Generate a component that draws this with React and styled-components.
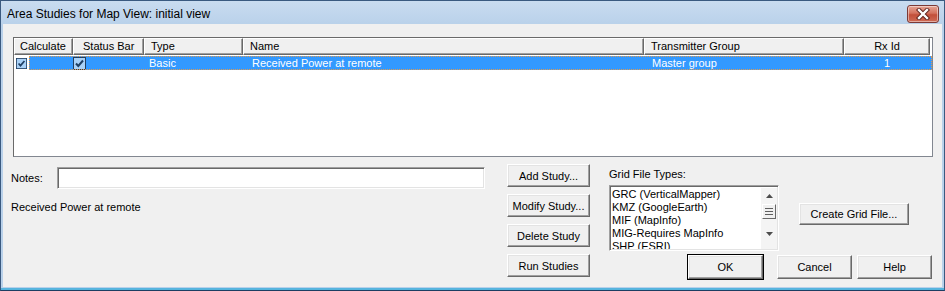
import React from 'react';
import styled, { createGlobalStyle } from 'styled-components';

const GlobalStyle = createGlobalStyle`
  html, body {
    margin: 0;
    padding: 0;
    background: #ffffff;
  }
  body {
    width: 945px;
    height: 291px;
    overflow: hidden;
    font-family: "Liberation Sans", Arial, sans-serif;
    font-size: 11px;
    color: #000;
  }
`;

const Window = styled.div`
  box-sizing: border-box;
  width: 945px;
  height: 291px;
  display: flex;
  flex-direction: column;
  border: 1px solid #3a5a80;
  border-bottom-color: #1d3e62;
  background: linear-gradient(#c9dcf0, #b9d1ea 24px);
  box-shadow: inset 0 -2px 0 #56b4de;
`;

const TitleBar = styled.div`
  height: 23px;
  display: flex;
  align-items: center;
  padding: 0 5px 0 6px;
`;

const Title = styled.div`
  flex: 1;
  font-size: 12px;
  padding-top: 3px;
  color: #000;
`;

const CloseButton = styled.div`
  width: 30px;
  height: 16px;
  margin-top: 3px;
  display: flex;
  align-items: center;
  justify-content: center;
  border: 1px solid #7c3a36;
  border-radius: 3px;
  background: linear-gradient(#e6a595, #d4725e 45%, #c24f3a 55%, #cf6b55);
  box-shadow: inset 0 0 0 1px rgba(255, 255, 255, 0.45);
`;

const Client = styled.div`
  flex: 1;
  margin: 0 2px 3px 2px;
  background: #f0f0f0;
  padding: 13px 8px 0 8px;
  display: flex;
  flex-direction: column;
`;

const ListView = styled.div`
  box-sizing: border-box;
  width: 920px;
  height: 120px;
  margin-left: 2px;
  background: #fff;
  border: 1px solid #828790;
  border-top-color: #6a6a6a;
  border-left-color: #6a6a6a;
`;

const HeaderRow = styled.div`
  display: flex;
  height: 17px;
`;

const HeaderCell = styled.div`
  box-sizing: border-box;
  width: ${({ w }) => w}px;
  padding: 0 ${({ pad }) => pad || 6}px;
  line-height: 15px;
  text-align: ${({ align }) => align || 'left'};
  background: #f0f0f0;
  border: 1px solid;
  border-color: #fff #696969 #696969 #fff;
  box-shadow: inset -1px -1px 0 #a0a0a0;
  white-space: nowrap;
`;

const Row = styled.div`
  display: flex;
  height: 14px;
  margin-top: 1px;
`;

const Cell = styled.div`
  box-sizing: border-box;
  width: ${({ w }) => w}px;
  padding: 0 ${({ pad }) => pad || 0}px;
  height: 14px;
  line-height: 14px;
  display: flex;
  align-items: center;
  justify-content: ${({ align }) => (align === 'center' ? 'center' : 'flex-start')};
  color: #fff;
  white-space: nowrap;
`;

const Highlight = styled.div`
  flex: 1;
  display: flex;
  background: #3399ff;
  outline: 1px dotted #e09a50;
  outline-offset: -1px;
`;

const Bottom = styled.div`
  display: flex;
  align-items: flex-start;
  margin-top: 7px;
`;

const NotesPanel = styled.div`
  width: 474px;
  padding-top: 3px;
`;

const NotesRow = styled.div`
  display: flex;
  align-items: center;
`;

const Label = styled.div`
  width: ${({ w }) => (w ? `${w}px` : 'auto')};
  line-height: 13px;
  white-space: nowrap;
`;

const TextInput = styled.div`
  box-sizing: border-box;
  width: 428px;
  height: 22px;
  background: #fff;
  border: 1px solid;
  border-color: #a0a0a0 #fff #fff #a0a0a0;
  box-shadow: inset 1px 1px 0 #696969, inset -1px -1px 0 #e3e3e3;
`;

const Summary = styled.div`
  margin-top: 12px;
  line-height: 13px;
`;

const ButtonColumn = styled.div`
  display: flex;
  flex-direction: column;
  gap: 7px;
  margin-left: 22px;
`;

const Button = styled.div`
  box-sizing: border-box;
  width: ${({ w }) => w || 83}px;
  height: ${({ h }) => h || 23}px;
  margin-right: ${({ mr }) => mr || 0}px;
  display: flex;
  align-items: center;
  justify-content: center;
  background: #f0f0f0;
  border: 1px solid;
  border-color: #fff #696969 #696969 #fff;
  box-shadow: inset -1px -1px 0 #a0a0a0, inset 1px 1px 0 #e3e3e3;
  outline: ${({ primary }) => (primary ? '1px solid #000' : 'none')};
  white-space: nowrap;
`;

const GridPanel = styled.div`
  margin-left: 19px;
  padding-top: 4px;
  width: 323px;
  display: flex;
  flex-direction: column;
`;

const ListRow = styled.div`
  display: flex;
  align-items: flex-start;
  margin-top: 4px;
`;

const ListBox = styled.div`
  box-sizing: border-box;
  width: 170px;
  height: 66px;
  display: flex;
  background: #fff;
  border: 1px solid;
  border-color: #a0a0a0 #fff #fff #a0a0a0;
  box-shadow: inset 1px 1px 0 #696969, inset -1px -1px 0 #e3e3e3;
  padding: 2px 1px 1px 2px;
  overflow: hidden;
`;

const Items = styled.div`
  flex: 1;
  line-height: 13px;
  overflow: hidden;
  white-space: nowrap;
`;

const ScrollBar = styled.div`
  width: 16px;
  display: flex;
  flex-direction: column;
  align-items: center;
  background: #f4f4f4;
`;

const Arrow = styled.div`
  height: ${({ h }) => h}px;
  display: flex;
  align-items: center;
  justify-content: center;
`;

const Thumb = styled.div`
  box-sizing: border-box;
  width: 14px;
  height: 15px;
  border: 1px solid;
  border-color: #fff #696969 #696969 #fff;
  background: #f0f0f0;
  display: flex;
  align-items: center;
  justify-content: center;
`;

const CreateWrap = styled.div`
  margin-left: 20px;
  margin-top: 18px;
`;

const DialogButtons = styled.div`
  display: flex;
  justify-content: flex-end;
  margin-top: 4px;
`;

const columns = [
  { label: 'Calculate', w: 59, pad: 5 },
  { label: 'Status Bar', w: 71, pad: 9 },
  { label: 'Type', w: 99 },
  { label: 'Name', w: 401 },
  { label: 'Transmitter Group', w: 200 },
  { label: 'Rx Id', w: 86, align: 'center' },
];

const gridTypes = [
  'GRC (VerticalMapper)',
  'KMZ (GoogleEarth)',
  'MIF (MapInfo)',
  'MIG-Requires MapInfo',
  'SHP (ESRI)',
];

const Check = () => (
  <svg width="13" height="13" viewBox="0 0 13 13">
    <rect x="0.5" y="0.5" width="12" height="12" fill="#a9d1f7" stroke="#1f3f63" />
    <path d="M3 6.5 L5.3 9 L10 3.5" fill="none" stroke="#1f3f63" strokeWidth="2" />
  </svg>
);

const CloseGlyph = () => (
  <svg width="14" height="12" viewBox="0 0 14 12">
    <path d="M3 2 L11 10 M11 2 L3 10" stroke="#5a1f1a" strokeWidth="4.2" strokeLinecap="square" />
    <path d="M3 2 L11 10 M11 2 L3 10" stroke="#fff" strokeWidth="2.4" strokeLinecap="square" />
  </svg>
);

const UpArrow = () => (
  <svg width="7" height="4" viewBox="0 0 7 4">
    <path d="M3.5 0 L7 4 L0 4 Z" fill="#4d4d4d" />
  </svg>
);

const DownArrow = () => (
  <svg width="7" height="4" viewBox="0 0 7 4">
    <path d="M0 0 L7 0 L3.5 4 Z" fill="#4d4d4d" />
  </svg>
);

const Grip = () => (
  <svg width="8" height="7" viewBox="0 0 8 7">
    <path d="M0 0.5 H8 M0 3.5 H8 M0 6.5 H8" stroke="#5e5e5e" strokeWidth="1" />
  </svg>
);

export default function App() {
  return (
    <>
      <GlobalStyle />
      <Window>
        <TitleBar>
          <Title>Area Studies for Map View: initial view</Title>
          <CloseButton>
            <CloseGlyph />
          </CloseButton>
        </TitleBar>
        <Client>
          <ListView>
            <HeaderRow>
              {columns.map((c) => (
                <HeaderCell key={c.label} w={c.w} pad={c.pad} align={c.align}>
                  {c.label}
                </HeaderCell>
              ))}
            </HeaderRow>
            <Row>
              <Cell w={15} pad={2}>
                <Check />
              </Cell>
              <Highlight>
                <Cell w={44} />
                <Cell w={71} pad={0}>
                  <Check />
                </Cell>
                <Cell w={99} pad={5}>Basic</Cell>
                <Cell w={401} pad={9}>Received Power at remote</Cell>
                <Cell w={200} pad={8}>Master group</Cell>
                <Cell w={86} align="center">1</Cell>
              </Highlight>
            </Row>
          </ListView>
          <Bottom>
            <NotesPanel>
              <NotesRow>
                <Label w={46}>Notes:</Label>
                <TextInput />
              </NotesRow>
              <Summary>Received Power at remote</Summary>
            </NotesPanel>
            <ButtonColumn>
              <Button>Add Study...</Button>
              <Button>Modify Study...</Button>
              <Button>Delete Study</Button>
              <Button>Run Studies</Button>
            </ButtonColumn>
            <GridPanel>
              <Label>Grid File Types:</Label>
              <ListRow>
                <ListBox>
                  <Items>
                    {gridTypes.map((t) => (
                      <div key={t}>{t}</div>
                    ))}
                  </Items>
                  <ScrollBar>
                    <Arrow h={16}>
                      <UpArrow />
                    </Arrow>
                    <Thumb>
                      <Grip />
                    </Thumb>
                    <Arrow h={29}>
                      <DownArrow />
                    </Arrow>
                  </ScrollBar>
                </ListBox>
                <CreateWrap>
                  <Button w={110} h={22}>Create Grid File...</Button>
                </CreateWrap>
              </ListRow>
              <DialogButtons>
                <Button w={75} h={24} mr={14} primary>OK</Button>
                <Button w={75} h={24} mr={5}>Cancel</Button>
                <Button w={75} h={24}>Help</Button>
              </DialogButtons>
            </GridPanel>
          </Bottom>
        </Client>
      </Window>
    </>
  );
}
